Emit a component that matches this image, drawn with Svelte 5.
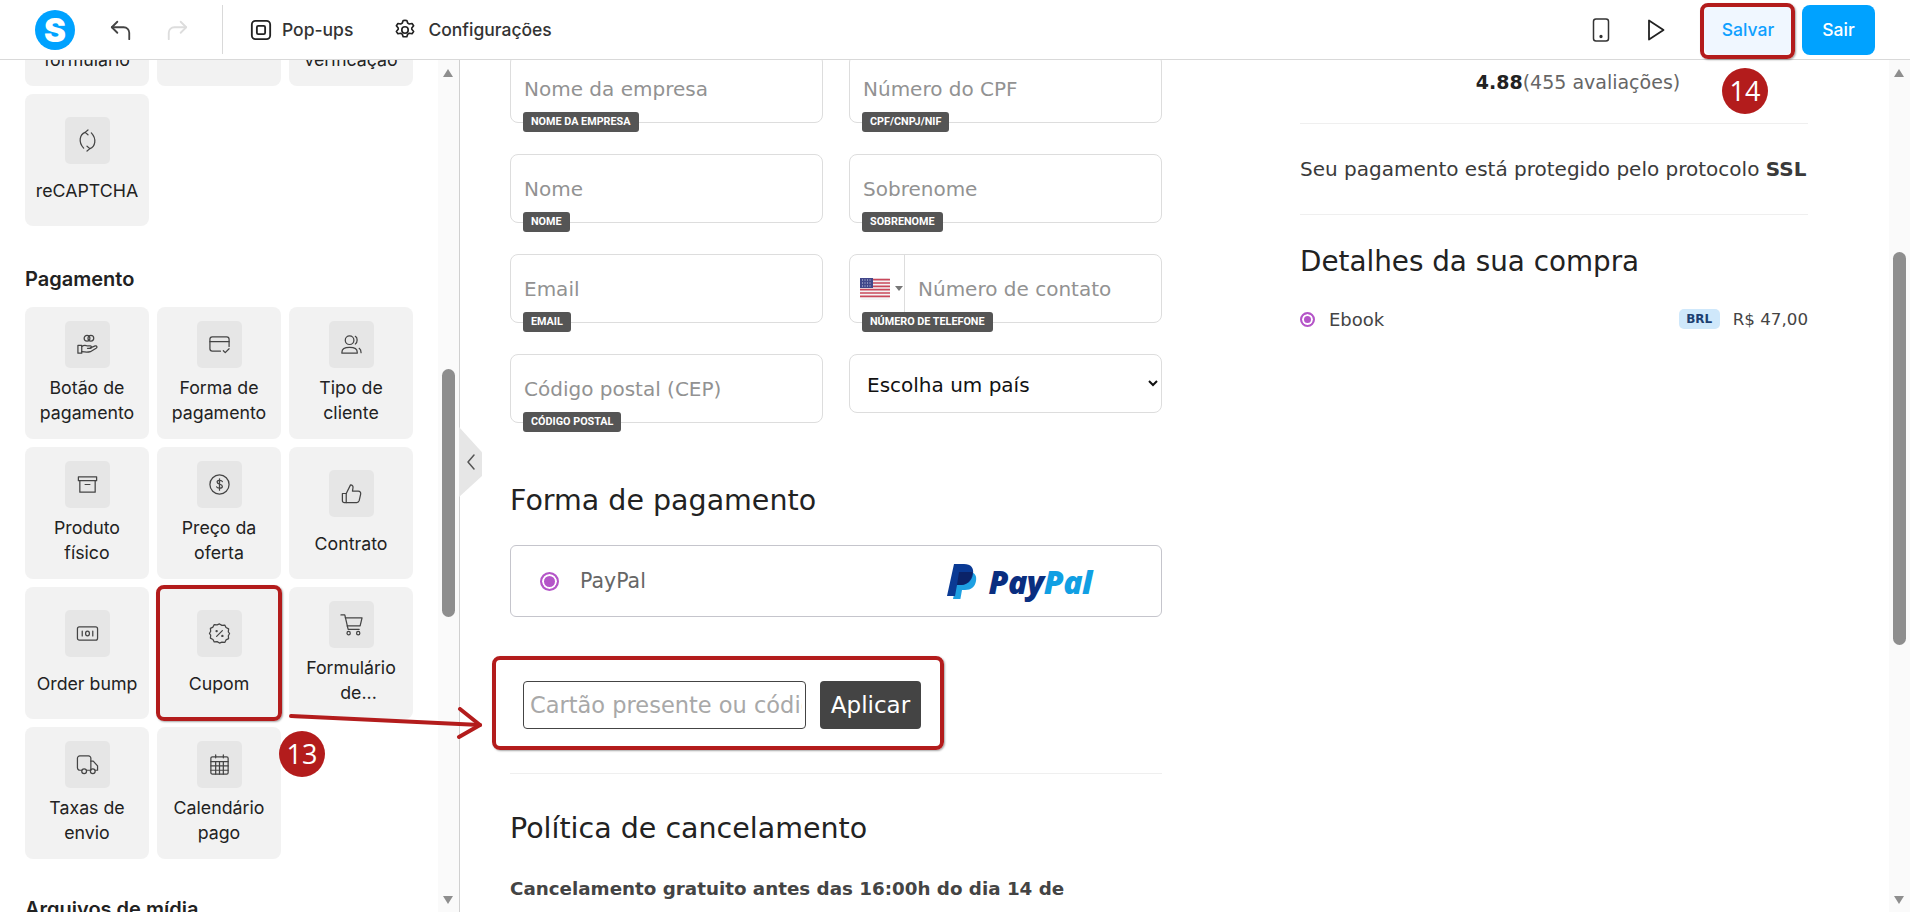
<script>
    const firstRow = [
        { lines: ["Etapas do", "formulário"] },
        { lines: [""] },
        { lines: ["Código de", "verificação"] },
    ];

    const payment = [
        { lines: ["Botão de", "pagamento"], icon: "hand" },
        { lines: ["Forma de", "pagamento"], icon: "card" },
        { lines: ["Tipo de", "cliente"], icon: "users" },
        { lines: ["Produto", "físico"], icon: "box" },
        { lines: ["Preço da", "oferta"], icon: "dollar" },
        { lines: ["Contrato"], icon: "thumb" },
        { lines: ["Order bump"], icon: "bill" },
        { lines: ["Cupom"], icon: "coupon" },
        { lines: ["Formulário", "de..."], icon: "cart", shift: true },
        { lines: ["Taxas de", "envio"], icon: "truck" },
        { lines: ["Calendário", "pago"], icon: "calendar" },
    ];

    const fields = [
        { placeholder: "Nome da empresa", tag: "Nome da empresa" },
        { placeholder: "Número do CPF", tag: "CPF/CNPJ/NIF" },
        { placeholder: "Nome", tag: "Nome" },
        { placeholder: "Sobrenome", tag: "Sobrenome" },
        { placeholder: "Email", tag: "Email" },
        { placeholder: "Número de contato", tag: "Número de telefone", phone: true },
        { placeholder: "Código postal (CEP)", tag: "Código postal" },
    ];
</script>

{#snippet tileIcon(name)}
    <svg class="tile-svg" viewBox="0 0 24 24" fill="none" stroke="currentColor" stroke-width="1.3" stroke-linecap="round" stroke-linejoin="round">
        {#if name === "recaptcha"}
            <path d="M9.500 3.500C4 5.500 2 13.500 8 20" />
            <path d="M14.500 20.500C20 18.500 22 10.500 16 4" />
            <path d="M12.500 1 9.500 3.500l3 2.500" />
            <path d="M11.500 23l3-2.500-3-2.500" />
        {:else if name === "hand"}
            <circle cx="11.500" cy="5.500" r="3" />
            <circle cx="15.500" cy="5.500" r="3" />
            <path d="M2 13h4v8H2z" />
            <path d="M6 14c2-1.500 4-1.500 6-.5h3c1.500 0 1.500 2.500 0 2.500h-3" />
            <path d="M15 15.500l5-2c2-.5 2.500 1.500 1 2.500l-6 3.500c-3 1-6 .5-9 0" />
        {:else if name === "card"}
            <path d="M13 19H4.500A2.500 2.500 0 0 1 2 16.500v-10A2.500 2.500 0 0 1 4.500 4h15A2.500 2.500 0 0 1 22 6.500V14" />
            <path d="M2 9h20" />
            <path d="m16 18.500 2 2 4-4" />
        {:else if name === "users"}
            <circle cx="10" cy="7.500" r="4.500" />
            <path d="M2 21v-1c0-3 3-5 8-5s8 2 8 5v1z" />
            <path d="M16 3.500c2.500 1 2.500 6.500 0 8" />
            <path d="M20 16c1.500 1 2 2.500 2 4.500" />
        {:else if name === "box"}
            <path d="M2.500 4h19v4h-19z" />
            <path d="M4 8v12h16V8" />
            <path d="M9.500 12h5" />
        {:else if name === "dollar"}
            <circle cx="12" cy="12" r="10" />
            <path d="M15 9c-.5-1.500-5.500-2-5.500.5 0 3 5.500 1.500 5.500 4.500 0 2.500-5.500 2-6 .5" />
            <path d="M12 6v12" />
        {:else if name === "thumb"}
            <path d="M2.500 12h4v9.500h-2a2 2 0 0 1-2-2z" />
            <path d="M6.500 12 11 3c2 0 3 1.500 2.500 3.500L13 9.500h6c2 0 3 1.500 2.500 3.500l-1.500 6.500c-.4 1.300-1.300 2-2.500 2h-11" />
        {:else if name === "bill"}
            <rect x="1.500" y="5" width="21" height="14" rx="2" />
            <path d="M6.500 9.500v5" />
            <ellipse cx="12" cy="12" rx="2" ry="2.500" />
            <path d="M17.500 9.500v5" />
        {:else if name === "coupon"}
            <path d="M12 2l2.500 1.500 3-.3 1.300 2.600 2.700 1.400-.3 3L22.500 12l-1.300 2.300.3 3-2.700 1.400-1.300 2.600-3-.3L12 22l-2.500-1.500-3 .3-1.300-2.600-2.700-1.400.3-3L1.500 12l1.300-2.300-.3-3 2.700-1.400 1.300-2.600 3 .3z" />
            <path d="m15 9-6 6" />
            <circle cx="9" cy="9.500" r=".6" />
            <circle cx="15" cy="14.500" r=".6" />
        {:else if name === "cart"}
            <path d="M1 2h4l3.500 15H20" />
            <path d="M5.500 5H23l-2 8.500H7.500" />
            <circle cx="9" cy="21" r="1.700" />
            <circle cx="19" cy="21" r="1.700" />
        {:else if name === "truck"}
            <path d="M6 18H4a2.500 2.500 0 0 1-2.500-2.500v-10A2.500 2.500 0 0 1 4 3h9a2.500 2.500 0 0 1 2.500 2.500V18H11" />
            <path d="M15.500 8.500H18l4.500 5V18H20" />
            <circle cx="8.500" cy="19" r="2.500" />
            <circle cx="17.500" cy="19" r="2.500" />
        {:else if name === "calendar"}
            <rect x="3" y="4" width="18" height="18" rx="1.500" />
            <path d="M3 9h18M3 13.500h18M3 18h18M8 9v13M12 9v13M16 9v13M8 2v3M16 2v3" />
        {/if}
    </svg>
{/snippet}

{#snippet tile(item)}
    <div class="tile" class:single={item.lines.length === 1}>
        <div class="tile-icon">{#if item.icon}{@render tileIcon(item.icon)}{/if}</div>
        <div class="tile-label">
            {#each item.lines as line, i}
                <div class:shifted={item.shift && i === 1}>{line}</div>
            {/each}
        </div>
    </div>
{/snippet}

<div class="app">
    <header class="topbar">
        <div class="logo">S</div>
        <svg class="undo" viewBox="0 0 24 24" fill="none" stroke="#444" stroke-width="2" stroke-linecap="round" stroke-linejoin="round">
            <path d="M8 3 2 9l6 6" /><path d="M2 9h13a6 6 0 0 1 6 6v7" />
        </svg>
        <svg class="redo" viewBox="0 0 24 24" fill="none" stroke="#ddd" stroke-width="2" stroke-linecap="round" stroke-linejoin="round">
            <path d="m16 3 6 6-6 6" /><path d="M22 9H9a6 6 0 0 0-6 6v7" />
        </svg>
        <div class="top-divider"></div>
        <div class="top-link popups">
            <svg viewBox="0 0 24 24" fill="none" stroke="#222" stroke-width="2" stroke-linejoin="round">
                <rect x="2" y="2" width="20" height="20" rx="4" /><rect x="7.500" y="7.500" width="9" height="9" rx="1.500" />
            </svg>
            <span>Pop-ups</span>
        </div>
        <div class="top-link config">
            <svg viewBox="0 0 24 24" fill="none" stroke="#222" stroke-width="1.800" stroke-linejoin="round">
                <path d="M12 1.500l2 .1 1 2.900 1.700 1 3-.6 1.700 2.500-2 2.400v1.400l2 2.400-1.700 2.500-3-.6-1.700 1-1 2.900-4 0-1-2.900-1.700-1-3 .6-1.700-2.500 2-2.400v-1.400l-2-2.400 1.700-2.500 3 .6 1.700-1 1-2.900z" />
                <circle cx="12" cy="12" r="3.500" />
            </svg>
            <span>Configurações</span>
        </div>
        <div class="top-right">
            <svg class="phone" viewBox="0 0 18 24" fill="none" stroke="#333" stroke-width="1.500">
                <rect x="1.500" y="1" width="15" height="22" rx="2.500" /><circle cx="9" cy="18.500" r=".9" fill="#333" />
            </svg>
            <svg class="play" viewBox="0 0 18 22" fill="none" stroke="#222" stroke-width="1.800" stroke-linejoin="round">
                <path d="M2 1.500v19L16.500 11z" />
            </svg>
            <button class="save">Salvar</button>
            <button class="exit">Sair</button>
        </div>
    </header>

    <div class="workspace">
        <aside class="sidebar">
            <div class="side-scroll">
                <div class="tile-grid first">
                    {#each firstRow as item}
                        {@render tile(item)}
                    {/each}
                    {@render tile({ lines: ["reCAPTCHA"], icon: "recaptcha" })}
                </div>
                <h3 class="side-title">Pagamento</h3>
                <div class="tile-grid">
                    {#each payment as item}
                        {@render tile(item)}
                    {/each}
                </div>
                <h3 class="side-title media">Arquivos de mídia</h3>
            </div>
            <div class="track">
                <span class="arrow up"></span>
                <div class="thumb side-thumb"></div>
                <span class="arrow down"></span>
            </div>
            <div class="collapse">
                <svg viewBox="0 0 12 20" fill="none" stroke="#555" stroke-width="1.500" stroke-linecap="round" stroke-linejoin="round">
                    <path d="M9 3 3 10l6 7" />
                </svg>
            </div>
        </aside>

        <main class="main">
            <div class="page">
                <section class="checkout">
                    <div class="form-grid">
                        {#each fields as field}
                            <div class="field">
                                <div class="field-box">
                                    {#if field.phone}
                                        <div class="flag-select">
                                            <svg class="flag" viewBox="0 0 30 22">
                                                <rect width="30" height="22" rx="3" fill="#f4f4f6" />
                                                <path d="M0 1.700h30M0 5h30M0 8.400h30M0 11.700h30M0 15h30M0 18.400h30" stroke="#c9485b" stroke-width="1.700" />
                                                <rect width="13" height="10" fill="#41478a" />
                                                <path d="M2 2h9M2 5h9M2 8h9" stroke="#cfd2e6" stroke-width="1" stroke-dasharray="1 1.500" />
                                            </svg>
                                            <span class="flag-caret"></span>
                                        </div>
                                    {/if}
                                    <input class="field-input" placeholder={field.placeholder} />
                                </div>
                                <span class="field-tag">{field.tag}</span>
                            </div>
                        {/each}
                        <select class="country">
                            <option>Escolha um país</option>
                        </select>
                    </div>

                    <h2 class="heading pay-heading">Forma de pagamento</h2>
                    <div class="pay-option">
                        <span class="radio"></span>
                        <span class="pay-name">PayPal</span>
                        <div class="pay-logo">
                            <svg viewBox="0 0 30 35">
                                <path d="M12 8h10c6 0 8 4 7 9-1 6-5 9-11 9h-3l-1.600 9H6z" fill="#1ea0e2" />
                                <path d="M7 0h10c7 0 10 4 9 10-1 7-6 11-12 11h-4l-2 11H0z" fill="#0a3a94" />
                                <path d="M12 8h13.600c-.7 8-5.600 13-11.600 13h-4z" fill="#0b2368" />
                            </svg>
                            <span class="pay-text"><span class="pay-dark">Pay</span><span class="pay-light">Pal</span></span>
                        </div>
                    </div>

                    <div class="coupon">
                        <input class="coupon-input" placeholder="Cartão presente ou código" />
                        <button class="coupon-apply">Aplicar</button>
                    </div>

                    <hr class="rule coupon-rule" />

                    <h2 class="heading policy-heading">Política de cancelamento</h2>
                    <p class="policy">Cancelamento gratuito antes das 16:00h do dia 14 de<br />Novembro. Após essa data, o valor pago não será reembolsado.</p>
                </section>

                <section class="summary">
                    <div class="rating"><b>4.88</b>(455 avaliações)</div>
                    <hr class="rule rating-rule" />
                    <p class="secure">Seu pagamento está protegido pelo protocolo <b>SSL</b></p>
                    <hr class="rule secure-rule" />
                    <h2 class="heading details-heading">Detalhes da sua compra</h2>
                    <div class="line-item">
                        <span class="radio small"></span>
                        <span class="item-name">Ebook</span>
                        <span class="currency">BRL</span>
                        <span class="price">R$ 47,00</span>
                    </div>
                </section>
            </div>
            <div class="track">
                <span class="arrow up"></span>
                <div class="thumb main-thumb"></div>
                <span class="arrow down"></span>
            </div>
        </main>
    </div>

    <!-- tutorial annotations drawn over the screenshot -->
    <div class="mark mark-cupom"></div>
    <div class="mark mark-coupon"></div>
    <div class="mark mark-save"></div>
    <div class="step step-13">13</div>
    <div class="step step-14">14</div>
    <svg class="pointer" viewBox="0 0 200 40" fill="none" stroke="#b31c1c" stroke-width="4" stroke-linecap="round" stroke-linejoin="round">
        <path d="M2 9 191 18" />
        <path d="M171 2 191 18 170 30" />
    </svg>
</div>

<style>
    :global(body) {
        margin: 0;
        background: #fff;
    }

    .app {
        position: relative;
        width: 1910px;
        height: 912px;
        overflow: hidden;
        display: flex;
        flex-direction: column;
        font-family: Inter, sans-serif;
        color: #222;
    }

    .topbar {
        position: relative;
        z-index: 2;
        height: 59px;
        flex: none;
        display: flex;
        align-items: center;
        background: #fff;
        border-bottom: 1px solid #d9d9d9;
        padding-left: 35px;
    }

    .logo {
        width: 40px;
        height: 40px;
        border-radius: 50%;
        background: #00a2ff;
        color: #fff;
        font-size: 33px;
        font-weight: 900;
        line-height: 40px;
        text-align: center;
    }

    .undo,
    .redo {
        width: 22px;
        height: 22px;
    }

    .undo {
        margin-left: 35px;
    }

    .redo {
        margin-left: 34px;
    }

    .top-divider {
        width: 1px;
        height: 49px;
        background: #d9d9d9;
        margin-left: 34px;
    }

    .top-link {
        display: flex;
        align-items: center;
        gap: 10px;
        font-size: 17.5px;
        font-weight: 500;
        color: #333;
    }

    .top-link svg {
        width: 22px;
        height: 22px;
    }

    .popups {
        margin-left: 27px;
    }

    .config {
        margin-left: 41px;
        gap: 12px;
    }

    .top-right {
        margin-left: auto;
        display: flex;
        align-items: center;
        padding-right: 35px;
    }

    .phone {
        width: 18px;
        height: 24px;
    }

    .play {
        width: 18px;
        height: 22px;
        margin-left: 37px;
    }

    .save,
    .exit {
        height: 50px;
        border: none;
        border-radius: 8px;
        font-family: Inter, sans-serif;
        font-size: 17.5px;
        font-weight: 500;
    }

    .save {
        width: 88px;
        margin-left: 39px;
        background: #f0f7ff;
        color: #0ea0ff;
    }

    .exit {
        width: 73px;
        margin-left: 10px;
        background: #00a2ff;
        color: #fff;
    }

    .workspace {
        flex: 1;
        display: flex;
        min-height: 0;
    }

    .sidebar {
        position: relative;
        width: 460px;
        flex: none;
        display: flex;
        border-right: 1px solid #d0d0d0;
        box-sizing: border-box;
    }

    .side-scroll {
        flex: 1;
        overflow: hidden;
        padding-left: 25px;
    }

    .tile-grid {
        display: grid;
        grid-template-columns: repeat(3, 124px);
        grid-auto-rows: 132px;
        gap: 8px;
    }

    .tile-grid.first {
        margin-top: -106px;
    }

    .tile {
        display: flex;
        flex-direction: column;
        align-items: center;
        justify-content: center;
        background: #f2f2f2;
        border-radius: 8px;
        gap: 7px;
    }

    .tile.single {
        gap: 14px;
    }

    .tile-icon {
        width: 45px;
        height: 47px;
        flex: none;
        display: flex;
        align-items: center;
        justify-content: center;
        background: #e6e6e6;
        border-radius: 5px;
        color: #444;
    }

    .tile-svg {
        width: 23px;
        height: 23px;
    }

    .tile-label {
        padding-bottom: 1px;
        font-size: 17.75px;
        line-height: 25px;
        text-align: center;
        color: #222;
    }

    .shifted {
        margin-left: 15px;
    }

    .side-title {
        margin: 41px 0 15px;
        font-size: 20px;
        line-height: 25px;
        font-weight: 600;
        color: #222;
    }

    .side-title.media {
        margin-top: 38px;
    }

    .track {
        width: 21px;
        flex: none;
        position: relative;
        background: #fafafa;
    }

    .thumb {
        position: absolute;
        left: 4px;
        width: 13px;
        border-radius: 7px;
        background: #8e8e8e;
    }

    .side-thumb {
        top: 309px;
        height: 248px;
    }

    .main-thumb {
        top: 192px;
        height: 393px;
    }

    .arrow {
        position: absolute;
        left: 5px;
        width: 0;
        height: 0;
        border-left: 5.500px solid transparent;
        border-right: 5.500px solid transparent;
    }

    .arrow.up {
        top: 9px;
        border-bottom: 8px solid #8e8e8e;
    }

    .arrow.down {
        bottom: 8px;
        border-top: 8px solid #8e8e8e;
    }

    .collapse {
        position: absolute;
        left: 459px;
        top: 367px;
        width: 23px;
        height: 70px;
        display: flex;
        align-items: center;
        justify-content: center;
        background: #e6e6e6;
        clip-path: polygon(0 0, 100% 36%, 100% 70%, 0 100%);
    }

    .collapse svg {
        width: 12px;
        height: 20px;
    }

    .main {
        flex: 1;
        display: flex;
        min-width: 0;
    }

    .page {
        flex: 1;
        display: flex;
        gap: 138px;
        padding-left: 50px;
        overflow: hidden;
        font-family: "DejaVu Sans", sans-serif;
    }

    .checkout {
        width: 652px;
        flex: none;
    }

    .form-grid {
        display: grid;
        grid-template-columns: 313px 313px;
        gap: 31px 26px;
        align-items: start;
        margin-top: -6px;
    }

    .field {
        position: relative;
        height: 69px;
    }

    .field-box {
        height: 100%;
        box-sizing: border-box;
        display: flex;
        align-items: center;
        border: 1px solid #dddddd;
        border-radius: 8px;
        overflow: hidden;
    }

    .field-input {
        flex: 1;
        min-width: 0;
        border: none;
        outline: none;
        background: none;
        padding: 0 13px;
        font-family: inherit;
        font-size: 20px;
    }

    .field-input::placeholder {
        color: #929292;
        opacity: 1;
    }

    .field-tag {
        position: absolute;
        left: 13px;
        top: 58px;
        height: 20px;
        padding: 0 8px;
        border-radius: 3px;
        background: #555;
        color: #fff;
        font-family: Roboto, sans-serif;
        font-size: 10.8px;
        font-weight: 700;
        line-height: 20px;
        text-transform: uppercase;
        white-space: nowrap;
    }

    .flag-select {
        width: 55px;
        height: 100%;
        flex: none;
        box-sizing: border-box;
        display: flex;
        align-items: center;
        padding-left: 10px;
        gap: 5px;
        border-right: 1px solid #dddddd;
    }

    .flag {
        width: 30px;
        height: 22px;
        flex: none;
    }

    .flag-caret {
        width: 0;
        height: 0;
        border-left: 4.500px solid transparent;
        border-right: 4.500px solid transparent;
        border-top: 5px solid #777;
    }

    .country {
        height: 59px;
        width: 100%;
        border: 1px solid #dddddd;
        border-radius: 8px;
        background: #fff;
        padding: 2px 0 0 13px;
        font-family: inherit;
        font-size: 20px;
        color: #111;
    }

    .heading {
        margin: 0;
        font-size: 28.5px;
        line-height: 32px;
        font-weight: 400;
        color: #222;
    }

    .pay-heading {
        margin-top: 62px;
    }

    .pay-option {
        margin-top: 28px;
        height: 72px;
        box-sizing: border-box;
        display: flex;
        align-items: center;
        border: 1px solid #c5c5cc;
        border-radius: 6px;
        padding-left: 29px;
    }

    .radio {
        width: 19px;
        height: 19px;
        flex: none;
        box-sizing: border-box;
        border: 2px solid #b455c8;
        border-radius: 50%;
        background: #b455c8;
        box-shadow: inset 0 0 0 2px #fff;
    }

    .radio.small {
        width: 15px;
        height: 15px;
    }

    .pay-name {
        margin-left: 21px;
        font-size: 20.5px;
        color: #666;
    }

    .pay-logo {
        margin-left: auto;
        margin-right: 69px;
        display: flex;
        align-items: center;
        gap: 11px;
    }

    .pay-logo svg {
        width: 30px;
        height: 35px;
    }

    .pay-text {
        font-family: "Open Sans", sans-serif;
        font-size: 32px;
        font-style: italic;
        font-weight: 800;
        letter-spacing: -0.5px;
    }

    .pay-dark {
        color: #0a2e80;
    }

    .pay-light {
        color: #109fe3;
    }

    .coupon {
        display: flex;
        gap: 14px;
        margin: 64px 0 0 13px;
    }

    .coupon-input {
        width: 283px;
        height: 48px;
        box-sizing: border-box;
        border: 1px solid #444;
        border-radius: 4px;
        padding: 0 3px 0 6px;
        font-family: inherit;
        font-size: 22.5px;
        outline: none;
    }

    .coupon-input::placeholder {
        color: #a8a8a8;
        opacity: 1;
    }

    .coupon-apply {
        width: 101px;
        height: 48px;
        padding: 0;
        border: none;
        border-radius: 4px;
        background: #444;
        color: #fff;
        font-family: inherit;
        font-size: 23px;
    }

    .rule {
        margin: 0;
        border: none;
        border-top: 1px solid #efefef;
    }

    .coupon-rule {
        margin-top: 44px;
    }

    .policy-heading {
        margin-top: 39px;
    }

    .policy {
        margin: 27px 0 0;
        white-space: nowrap;
        font-size: 18.3px;
        line-height: 33px;
        font-weight: 700;
        color: #444;
    }

    .summary {
        width: 508px;
        flex: none;
    }

    .rating {
        margin-top: 9px;
        padding-left: 48px;
        text-align: center;
        font-size: 19px;
        line-height: 26px;
        color: #666;
    }

    .rating b {
        font-weight: 700;
        color: #222;
    }

    .rating-rule {
        margin-top: 28px;
    }

    .secure {
        margin: 32px 0 0;
        font-size: 20px;
        line-height: 26px;
        color: #3a3a3a;
        white-space: nowrap;
    }

    .secure b {
        font-weight: 700;
    }

    .secure-rule {
        margin-top: 32px;
    }

    .details-heading {
        margin-top: 31px;
        font-size: 27.800px;
    }

    .line-item {
        margin-top: 29px;
        height: 24px;
        display: flex;
        align-items: center;
        font-size: 16.7px;
        color: #444;
    }

    .item-name {
        margin-left: 14px;
        font-size: 18px;
    }

    .currency {
        margin-left: auto;
        width: 41px;
        height: 20px;
        border-radius: 5px;
        background: #cfe8fb;
        color: #1d3f72;
        font-size: 12px;
        font-weight: 700;
        line-height: 20px;
        text-align: center;
    }

    .price {
        margin-left: 13px;
    }

    .mark {
        position: absolute;
        z-index: 3;
        box-sizing: border-box;
        border: 4px solid #b31c1c;
        border-radius: 8px;
        box-shadow: 1px 1px 2px rgba(0, 0, 0, 0.35);
    }

    .mark-cupom {
        left: 156px;
        top: 585px;
        width: 126px;
        height: 136px;
    }

    .mark-coupon {
        left: 492px;
        top: 656px;
        width: 452px;
        height: 94px;
    }

    .mark-save {
        left: 1700px;
        top: 3px;
        width: 95px;
        height: 56px;
    }

    .step {
        position: absolute;
        z-index: 3;
        width: 46px;
        height: 46px;
        border-radius: 50%;
        background: #b31c1c;
        color: #fff;
        font-family: "Open Sans", sans-serif;
        font-size: 27px;
        line-height: 46px;
        text-align: center;
    }

    .step-13 {
        left: 279px;
        top: 731px;
    }

    .step-14 {
        left: 1722px;
        top: 68px;
    }

    .pointer {
        position: absolute;
        z-index: 3;
        left: 289px;
        top: 707px;
        width: 200px;
        height: 40px;
    }
</style>
